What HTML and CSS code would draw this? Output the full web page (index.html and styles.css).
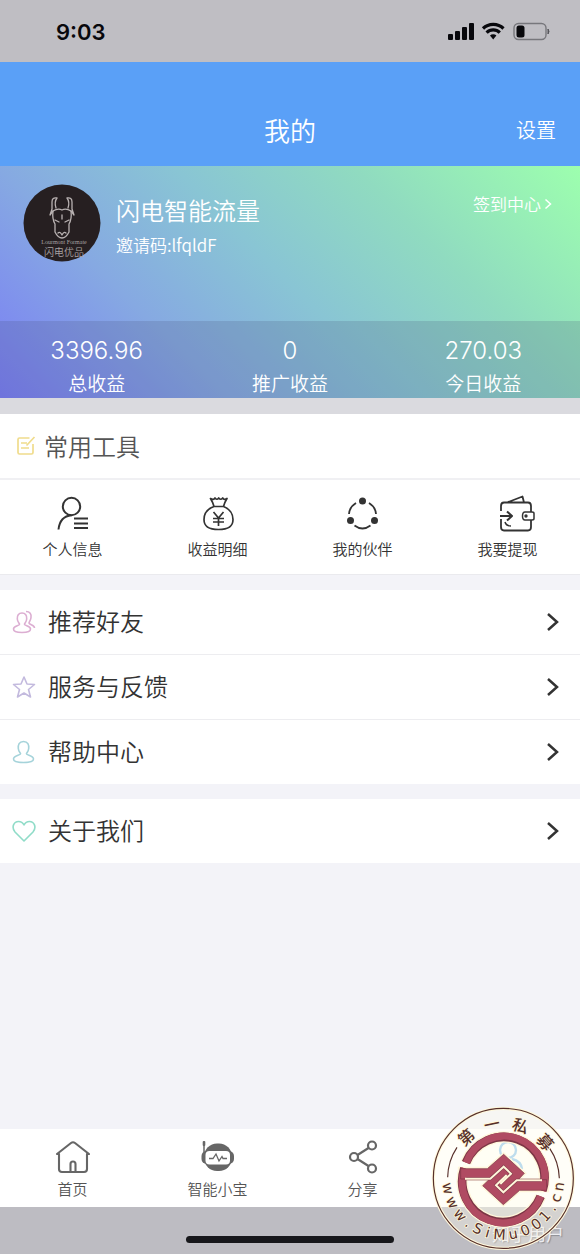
FILE: index.html
```html
<!DOCTYPE html>
<html lang="zh-CN">
<head>
<meta charset="utf-8">
<meta name="viewport" content="width=device-width, initial-scale=1">
<title>我的</title>
<link rel="stylesheet" href="styles.css">
</head>
<body>
<div class="app">
  <div class="status">
    <span class="clock">9:03</span>
    <svg class="signals" width="104" height="22" viewBox="0 0 104 22" aria-hidden="true">
      <g fill="#08080c">
        <rect x="0" y="13" width="5" height="6" rx="1"/><rect x="7" y="10" width="5" height="9" rx="1"/>
        <rect x="14" y="6" width="5" height="13" rx="1"/><rect x="21" y="2" width="5" height="17" rx="1"/>
        <path d="M42 14.500 a4.600 4.600 0 0 1 6.400 0 L45.200 18.600Z"/>
      </g>
      <g fill="none" stroke="#08080c" stroke-width="3.200">
        <path d="M35 7.500a14.600 14.600 0 0 1 20.500 0"/><path d="M38.600 11.600a9.400 9.400 0 0 1 13.200 0"/>
      </g>
      <rect x="66" y="2.500" width="32" height="16" rx="4.500" fill="none" stroke="#77777c" stroke-width="1.400"/>
      <rect x="68.500" y="4.500" width="8" height="12" rx="2.500" fill="#08080c"/>
      <path d="M100 8v5q2-2.500 0-5z" fill="#55555a" stroke="#55555a"/>
    </svg>
  </div>

  <header class="nav">
    <h1 class="nav-title">我的</h1>
    <button class="nav-action" type="button">设置</button>
  </header>

  <section class="hero">
    <div class="profile">
      <svg class="avatar" width="78" height="78" viewBox="0 0 78 78" role="img" aria-label="头像">
        <circle cx="39" cy="39" r="38.500" fill="#261f21"/>
        <g fill="none" stroke="#b9b2b2" stroke-width="1.300" stroke-linejoin="round" stroke-linecap="round">
          <path d="M34 14q-5-1-5 4v7l-2 6 3-4q5-3 9-1 4-2 9 1l3 4-2-6v-7q0-5-5-4 3 4 1 10M34 14q-3 4-1 10"/>
          <path d="M30 27q-1 8 2 13v8q3 6 7 6t7-6v-8q3-5 2-13M32 36l4 2M46 36l-4 2M35 49q2-2 4 2 2-4 4-2M39 31v4"/>
        </g>
        <text class="avatar-script" x="41" y="60" text-anchor="middle">Lourmont Formate</text>
        <text class="avatar-brand" x="41" y="72" text-anchor="middle">闪电优品</text>
      </svg>
      <div class="identity">
        <h2 class="name">闪电智能流量</h2>
        <p class="invite">邀请码:lfqldF</p>
      </div>
      <a class="checkin" href="#checkin">签到中心<svg width="8" height="12" viewBox="0 0 8 12" aria-hidden="true"><path d="M1.500 1.500 6.500 6l-5 4.500" fill="none" stroke="currentColor" stroke-width="1.500"/></svg></a>
    </div>
    <dl class="stats">
      <div class="stat"><dd>3396.96</dd><dt>总收益</dt></div>
      <div class="stat"><dd>0</dd><dt>推广收益</dt></div>
      <div class="stat"><dd>270.03</dd><dt>今日收益</dt></div>
    </dl>
  </section>

  <section class="tools">
    <h2 class="tools-title">
      <svg width="20" height="20" viewBox="0 0 20 20" fill="none" stroke="#f0dc8c" stroke-width="1.700" aria-hidden="true"><path d="M13.500 2H3.500Q2 2 2 3.500v13Q2 18 3.500 18h12q1.500 0 1.500-1.500V8M5 7h6M5 12h8M10.500 9.500 18.500 1"/></svg>
      <span>常用工具</span>
    </h2>
    <nav class="tool-grid">
      <a class="tool" href="#info">
        <svg width="40" height="40" viewBox="0 0 40 40" fill="none" stroke="#333" stroke-width="2" aria-hidden="true"><circle cx="18.500" cy="12.500" r="8.700"/><path d="M5.500 35.500C6.500 26.500 10.500 22 18.500 21.300M21 24.500h14M21 29.500h14M21 34h14"/></svg>
        个人信息
      </a>
      <a class="tool" href="#income">
        <svg width="40" height="40" viewBox="0 0 40 40" fill="none" stroke="#333" stroke-width="1.700" stroke-linejoin="round" aria-hidden="true"><path d="M16 12.500q-1-4-3.500-8 3 2 4.500-.5 2 2.500 3.700 0 2 2.500 4 0 1.500 2.500 4.300.5-2.500 4-3.500 8zM16 12.500C9 15 6 20.500 6 25.500 6 33 11 35.500 20.500 35.500S35 33 35 25.500C35 20.500 32 15 25.500 12.500zM15.500 18l5 6 5-6M20.500 24v8M15 24.500h11M15 28h11"/></svg>
        收益明细
      </a>
      <a class="tool" href="#partner">
        <svg width="40" height="40" viewBox="0 0 40 40" fill="none" stroke="#333" stroke-width="1.800" aria-hidden="true"><path d="M13 9Q6.500 13 6 20M26 9q6.500 4 7 11M11.500 31.500q8 6 16 0"/><g fill="#333" stroke="none"><circle cx="19.500" cy="7" r="3.500"/><circle cx="7.500" cy="26.500" r="3.500"/><circle cx="31.500" cy="26.500" r="3.500"/></g></svg>
        我的伙伴
      </a>
      <a class="tool" href="#withdraw">
        <svg width="56" height="40" viewBox="-17 0 56 40" fill="none" stroke="#333" stroke-width="1.800" stroke-linejoin="round" aria-hidden="true"><path d="M10 8.500 25.500 2.500l1.500 6M34 18v-6q0-3.500-3-3.500H7q-3 0-3 3.500v5M4 25v8q0 3.500 3 3.500h24q3 0 3-3.500v-7"/><path d="M28 18h7q2 0 2 1.500v5q0 1.500-2 1.500h-7q-2.500 0-2.500-4t2.500-4zM8 28q1 4 6 4" stroke-width="1.500"/><path d="M3 22h11M10 17.500l5 4.500-5 4.500" stroke-width="2"/><circle cx="29" cy="22" r=".8" fill="#333"/></svg>
        我要提现
      </a>
    </nav>
  </section>

  <ul class="menu">
    <li><a class="row" href="#invite">
      <svg class="row-icon" width="24" height="24" viewBox="0 0 24 24" fill="none" stroke="#dcaed2" stroke-width="1.600" aria-hidden="true"><path d="M10 3C6.500 3 5 5.500 5.300 9c.2 2.500 1.200 3.500 2.200 5C8 16 1.500 15.500 1.500 19c0 3 3 3.500 8.500 3.500s8.500-.5 8.500-3.500c0-3.500-6.500-3-6-5 1-1.500 2-2.500 2.200-5C15 5.500 13.500 3 10 3zM14 1.500c4 0 5.500 2.500 5 6-.2 2.500-1.500 3.500-2 5.500.5 2 5.500 1.500 5.500 5"/></svg>
      <span class="row-label">推荐好友</span>
      <svg class="arrow" width="14" height="20" viewBox="0 0 14 20" aria-hidden="true"><path d="M2 2l9 8-9 8"/></svg>
    </a></li>
    <li><a class="row" href="#feedback">
      <svg class="row-icon" width="24" height="24" viewBox="0 0 24 24" fill="none" stroke="#c3bade" stroke-width="1.600" stroke-linejoin="round" aria-hidden="true"><path d="M12 2l3 7 7.500.5-6 5 2 7.500L12 18l-6.500 4 2-7.500-6-5L9 9z"/></svg>
      <span class="row-label">服务与反馈</span>
      <svg class="arrow" width="14" height="20" viewBox="0 0 14 20" aria-hidden="true"><path d="M2 2l9 8-9 8"/></svg>
    </a></li>
    <li><a class="row" href="#help">
      <svg class="row-icon" width="24" height="24" viewBox="0 0 24 24" fill="none" stroke="#a5d3da" stroke-width="1.600" aria-hidden="true"><path d="M11.500 1.500C7 1.500 6 5 6.300 8.500c.2 2.500 1.200 3.500 2.200 5 .5 2-7 1.500-7 5.500 0 3 4 3.500 10 3.500s10-.5 10-3.500c0-4-7.500-3.500-7-5.500 1-1.500 2-2.500 2.200-5C17 5 16 1.500 11.500 1.500z"/></svg>
      <span class="row-label">帮助中心</span>
      <svg class="arrow" width="14" height="20" viewBox="0 0 14 20" aria-hidden="true"><path d="M2 2l9 8-9 8"/></svg>
    </a></li>
  </ul>
  <ul class="menu">
    <li><a class="row" href="#about">
      <svg class="row-icon" width="24" height="24" viewBox="0 0 24 24" fill="none" stroke="#90dcc8" stroke-width="1.600" stroke-linejoin="round" aria-hidden="true"><path d="M12 22 3 13C-1 8 2 2.500 6.500 2.500 9.500 2.500 11 4 12 6c1-2 2.500-3.500 5.500-3.500C22 2.500 25 8 21 13z"/></svg>
      <span class="row-label">关于我们</span>
      <svg class="arrow" width="14" height="20" viewBox="0 0 14 20" aria-hidden="true"><path d="M2 2l9 8-9 8"/></svg>
    </a></li>
  </ul>

  <nav class="tabs">
    <a class="tab" href="#home">
      <svg width="36" height="36" viewBox="0 0 36 36" fill="none" stroke="#666" stroke-width="2.100" stroke-linejoin="round" stroke-linecap="round" aria-hidden="true"><path d="M2 15 16 4q2-1.500 4 0l14 11h-2v15q0 3-3 3H7q-3 0-3-3V15zM15.500 33v-8q0-2.500 2.500-2.500t2.500 2.500v8"/></svg>
      首页
    </a>
    <a class="tab" href="#robot">
      <svg width="36" height="36" viewBox="0 0 36 36" aria-hidden="true"><rect x="4" y="4.500" width="28" height="27.500" rx="13" fill="#666"/><rect x="1.500" y="12" width="32.500" height="13" rx="5" fill="#666"/><rect x="5.500" y="12" width="24.500" height="13.500" rx="4" fill="#fff"/><path d="M9 19.500h4l3-4.500 3 7 3-4.500 1 2h4" fill="none" stroke="#666" stroke-width="1.300"/><path d="M4 3v12" stroke="#666" stroke-width="1.500"/><rect x="2.700" y="2" width="2.600" height="5" rx="1" fill="#666"/></svg>
      智能小宝
    </a>
    <a class="tab" href="#share">
      <svg width="36" height="36" viewBox="0 0 36 36" fill="none" stroke="#666" stroke-width="2.200" aria-hidden="true"><circle cx="27" cy="6.500" r="4"/><circle cx="9" cy="18" r="4"/><circle cx="27" cy="29.500" r="4"/><path d="M12.500 16 23.500 9M12.500 20l11 7"/></svg>
      分享
    </a>
    <a class="tab" href="#me" aria-label="我的" aria-current="page">
      <svg width="36" height="36" viewBox="0 0 36 36" fill="none" stroke="#7dbdf0" stroke-width="2.400" aria-hidden="true"><circle cx="18" cy="11" r="8"/><path d="M5 33q1-12 13-13.500M22 20q9 2 10 10"/></svg>
    </a>
  </nav>
  <footer class="home-area"><span class="home-bar"></span></footer>

  <div class="watermark">
    <span class="credit">知乎用户</span>
    <svg class="seal" viewBox="0 0 465 462" role="img" aria-label="第一私募 www.SiMu001.cn">
      <circle cx="235" cy="236" r="171" fill="none" stroke="#fffdeb" stroke-width="78" opacity=".35"/>
      <circle cx="235" cy="238" r="130" fill="#fffde9" opacity=".5"/>
      <circle cx="235" cy="235" r="210" fill="none" stroke="#fff8dc" stroke-width="10"/>
      <g fill="none" stroke="#572f2a" stroke-width="3.500">
        <circle cx="235" cy="235" r="210"/>
        <path d="M68 232A167 167 0 0 1 96 142M374 145A167 167 0 0 1 403 235"/>
      </g>
      <g transform="translate(90 90)">
        <g fill="none" stroke="#fff6da" stroke-width="34"><path d="M33 98A122 122 0 0 1 262 182M257 199A122 122 0 0 1 28 115"/></g>
        <path d="M13 115H97L146 72 209 130 190 150H278V182H194L145 225 82 167 104 147H13z" fill="#fff6da" stroke="#fff6da" stroke-width="9"/>
        <g fill="none" stroke="#7b3545" stroke-width="26"><path d="M33 98A122 122 0 0 1 262 182M257 199A122 122 0 0 1 28 115"/></g>
        <g fill="none" stroke="#b04b62" stroke-width="21"><path d="M34 98A121 121 0 0 1 262 182M257 199A121 121 0 0 1 29 115"/></g>
        <path d="M17 116H97L146 73 208 130 190 149H275V181H194L145 224 83 167 104 147H17z" fill="#b04b62" stroke="#7b3545" stroke-width="2"/>
        <g fill="none" stroke="#7b3545" stroke-width="9"><path d="M34 146H106L146 110 168 131 136 162M257 151H185L145 187 123 166 155 135"/></g>
        <g fill="none" stroke="#fff6da" stroke-width="6"><path d="M30 146H106L146 110 168 131 136 162M261 151H185L145 187 123 166 155 135"/></g>
      </g>
      <g class="seal-cn" text-anchor="middle">
        <text transform="rotate(-42 235 236)" x="235" y="87">第</text>
        <text transform="rotate(-12 235 236)" x="235" y="87">一</text>
        <text transform="rotate(18 235 236)" x="235" y="87">私</text>
        <text transform="rotate(49 235 236)" x="235" y="87">募</text>
      </g>
      <g class="seal-url" text-anchor="middle">
        <text transform="rotate(80 235 236)" x="235" y="419">w</text>
        <text transform="rotate(65 235 236)" x="235" y="419">w</text>
        <text transform="rotate(50 235 236)" x="235" y="419">w</text>
        <text transform="rotate(38 235 236)" x="235" y="419">.</text>
        <text transform="rotate(27 235 236)" x="235" y="419">S</text>
        <text transform="rotate(16 235 236)" x="235" y="419">i</text>
        <text transform="rotate(4 235 236)" x="235" y="419">M</text>
        <text transform="rotate(-10 235 236)" x="235" y="419">u</text>
        <text transform="rotate(-23 235 236)" x="235" y="419">0</text>
        <text transform="rotate(-36 235 236)" x="235" y="419">0</text>
        <text transform="rotate(-48 235 236)" x="235" y="419">1</text>
        <text transform="rotate(-59 235 236)" x="235" y="419">.</text>
        <text transform="rotate(-70 235 236)" x="235" y="419">c</text>
        <text transform="rotate(-82 235 236)" x="235" y="419">n</text>
      </g>
    </svg>
  </div>
</div>
</body>
</html>
```

FILE: styles.css
```css
* { box-sizing: border-box; }

body {
  margin: 0;
  background: #f3f3f8;
  color: #333;
  font-family: "Noto Sans CJK SC", sans-serif;
  font-weight: 350;
}

h1, h2, p, dl, dd, ul { margin: 0; padding: 0; font-weight: inherit; }
ul { list-style: none; }
a { color: inherit; text-decoration: none; }
svg { display: block; flex: none; }

.app {
  position: relative;
  display: flex;
  flex-direction: column;
  min-height: 100vh;
}

.status {
  display: flex;
  align-items: center;
  justify-content: space-between;
  height: 62px;
  padding: 2px 28px 0 56px;
  background: #bfbec3;
}
.clock {
  color: #08080c;
  font: 600 22px/28px Inter, sans-serif;
}

.nav {
  display: grid;
  grid-template-columns: 1fr auto 1fr;
  align-items: end;
  height: 104px;
  padding: 0 24px 16px;
  background: #5aa0f7;
  color: #fff;
}
.nav-title {
  grid-column: 2;
  font-size: 26px;
  line-height: 40px;
}
.nav-action {
  justify-self: end;
  padding: 0;
  border: 0;
  background: none;
  color: inherit;
  font: inherit;
  font-size: 20px;
  line-height: 40px;
}

.hero {
  background: linear-gradient(45deg, #7a7df6 0%, #86a9e2 28%, #89c5d4 50%, #90dbc0 72%, #9dffae 100%);
  color: #fff;
}
.profile {
  display: flex;
  align-items: flex-start;
  height: 155px;
  padding: 18px 28px 0 23px;
}
.avatar-script { fill: #a8a1a1; font: 6px "Liberation Serif", serif; }
.avatar-brand { fill: #a8a1a1; font-size: 10px; }
.identity { flex: 1; padding: 8px 0 0 15px; }
.name { font-size: 24px; line-height: 36px; }
.invite { font-size: 17px; line-height: 34px; }
.checkin {
  display: flex;
  align-items: center;
  gap: 3px;
  padding-top: 6px;
  font-size: 17px;
  line-height: 28px;
}

.stats {
  display: grid;
  grid-template-columns: repeat(3, 1fr);
  height: 77px;
  padding-top: 14px;
  background: rgba(70, 80, 120, 0.2);
  text-align: center;
}
.stat { display: flex; flex-direction: column; }
.stat dd { font: 300 24px/32px Inter, sans-serif; }
.stat dt { font-size: 19px; line-height: 32px; }

.tools {
  border-top: 16px solid #dadadf;
  border-bottom: 1px solid #eaeaee;
  background: #fff;
}
.tools-title {
  display: flex;
  align-items: center;
  gap: 8px;
  height: 66px;
  padding: 0 16px;
  border-bottom: 2px solid #f0f0f3;
  color: #555;
  font-size: 24px;
}
.tools-title span { padding-bottom: 2px; }
.tool-grid {
  display: grid;
  grid-template-columns: repeat(4, 1fr);
  padding: 14px 0;
}
.tool {
  display: flex;
  flex-direction: column;
  align-items: center;
  gap: 3px;
  font-size: 15px;
  line-height: 23px;
}

.menu { margin-top: 15px; background: #fff; }
.menu li + li { border-top: 1px solid #ededf0; }
.row {
  display: flex;
  align-items: center;
  gap: 12px;
  height: 64px;
  padding: 0 20px 0 12px;
  font-size: 24px;
}
.row-label { flex: 1; padding-bottom: 3px; }
.arrow { fill: none; stroke: #333; stroke-width: 2.5; }

.tabs {
  display: grid;
  grid-template-columns: repeat(4, 1fr);
  height: 78px;
  margin-top: auto;
  padding-top: 10px;
  background: #fff;
  color: #555;
}
.tab {
  display: flex;
  flex-direction: column;
  align-items: center;
  gap: 2px;
  font-size: 15px;
  line-height: 23px;
}

.home-area {
  display: flex;
  justify-content: center;
  height: 47px;
  padding-top: 29px;
  background: #bdbcc2;
}
.home-bar {
  width: 36%;
  height: 7px;
  border-radius: 4px;
  background: #17171b;
}

.watermark {
  position: absolute;
  right: 0;
  bottom: 0;
  width: 155px;
  height: 154px;
}
.credit {
  position: absolute;
  right: 16px;
  bottom: 8px;
  color: #ececf0;
  font-size: 18px;
  font-weight: 400;
  line-height: 26px;
  text-shadow: 1px 1px 1px #8c8c92;
}
.seal { position: relative; width: 100%; height: 100%; }
.seal text {
  fill: #572f2a;
  stroke: #fff8dc;
  stroke-width: 5px;
  stroke-linejoin: round;
  paint-order: stroke;
}
.seal-cn { font-size: 48px; font-weight: 500; }
.seal-url { font: 43px "DejaVu Sans", sans-serif; }
```
